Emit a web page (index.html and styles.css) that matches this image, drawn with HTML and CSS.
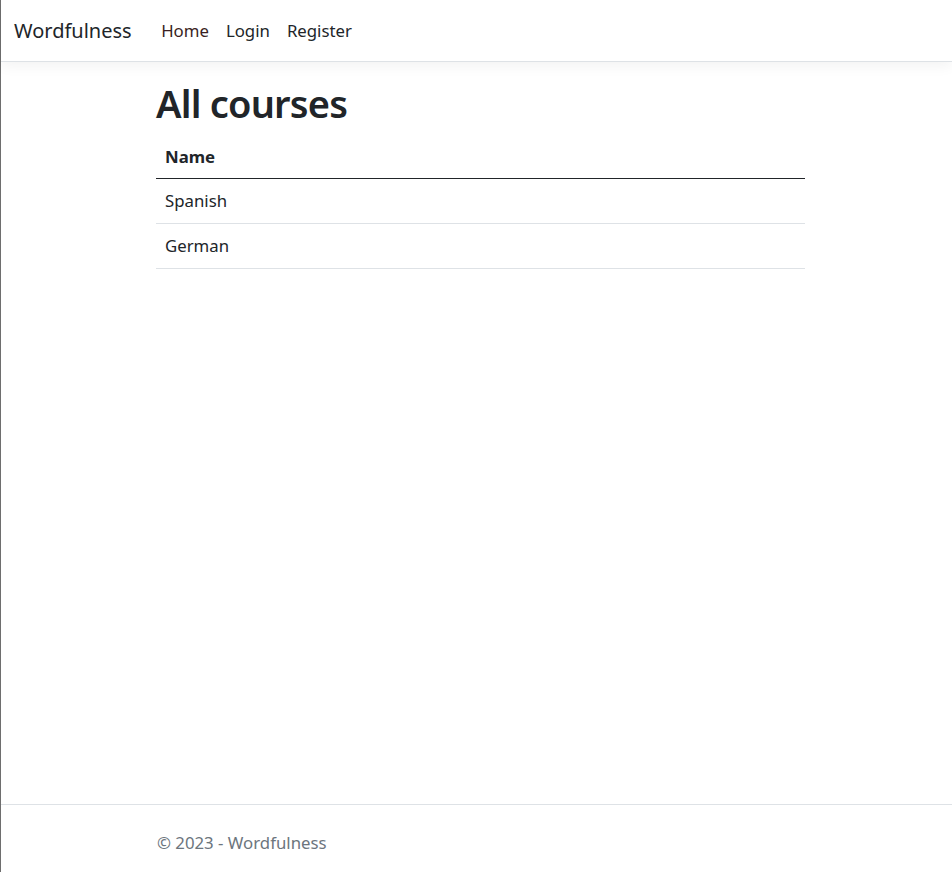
FILE: index.html
```html
<!DOCTYPE html>
<html lang="en">
<head>
<meta charset="utf-8">
<title>All courses - Wordfulness</title>
<link rel="stylesheet" href="styles.css">
</head>
<body>
<div class="page">
  <header class="navbar">
    <a class="brand" href="#">Wordfulness</a>
    <nav class="nav">
      <a class="nav-link home" href="#">Home</a>
      <a class="nav-link" href="#">Login</a>
      <a class="nav-link" href="#">Register</a>
    </nav>
  </header>
  <main class="content">
    <h1 class="title">All courses</h1>
    <table class="table">
      <thead>
        <tr><th>Name</th></tr>
      </thead>
      <tbody>
        <tr><td>Spanish</td></tr>
        <tr><td>German</td></tr>
      </tbody>
    </table>
  </main>
  <footer class="footer">
    <div class="footer-inner">&copy; 2023 - Wordfulness</div>
  </footer>
</div>
</body>
</html>
```

FILE: styles.css
```css
* { box-sizing: border-box; }
html, body { margin: 0; padding: 0; }
body {
  font-family: "Noto Sans", "Open Sans", sans-serif;
  font-size: 16.8px;
  color: #212529;
  background: #fff;
}
.page {
  min-height: 872px;
  border-left: 1px solid #6e6e6e;
  display: flex;
  flex-direction: column;
}
.navbar {
  height: 62px;
  border-bottom: 1px solid #dee2e6;
  box-shadow: 0 4px 13px rgba(0,0,0,0.05);
  display: flex;
  align-items: center;
  padding-left: 13px;
}
.brand {
  font-size: 20px;
  color: #212529;
  text-decoration: none;
  margin-right: 21px;
}
.nav { display: flex; }
.nav-link {
  color: #212529;
  text-decoration: none;
  padding: 0 8.5px;
  font-size: 16.8px;
}
.nav-link.home { color: #3a1f22; }
.content {
  margin-left: 155px;
  width: 649px;
  padding-top: 19px;
}
.title {
  font-size: 38px;
  font-weight: 600;
  letter-spacing: -0.8px;
  line-height: 1.2;
  margin: 0 0 10px 0;
}
.table {
  width: 100%;
  border-collapse: collapse;
}
.table th, .table td {
  text-align: left;
  padding: 0 9px;
  height: 45px;
  line-height: 26px;
  border-bottom: 1px solid #dee2e6;
}
.table th {
  font-weight: 700;
  border-bottom: 1px solid #212529;
  height: 42px;
}
.footer {
  margin-top: auto;
  border-top: 1px solid #dee2e6;
  height: 68px;
  color: #6c757d;
}
.footer-inner {
  padding-left: 156px;
  line-height: 76px;
}
```
